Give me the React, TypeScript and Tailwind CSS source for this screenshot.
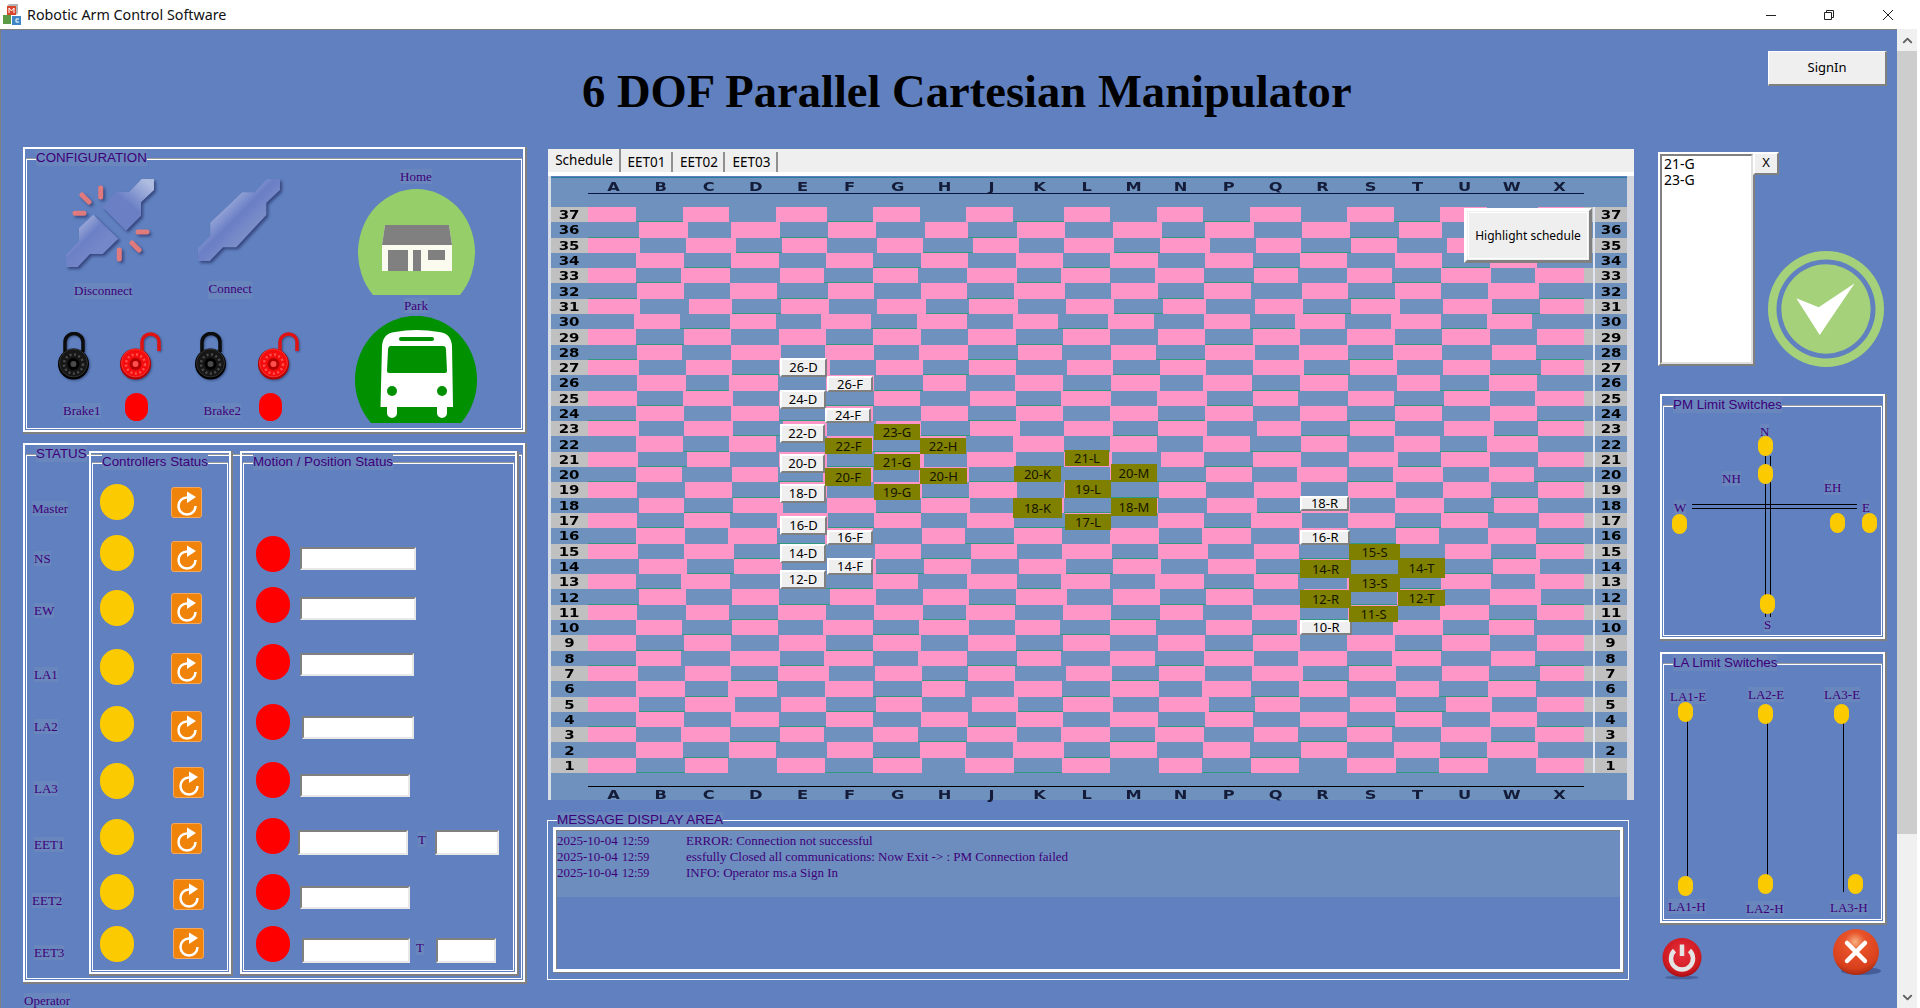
import React from 'react';
import clsx from 'clsx';
import { ChevronDown, ChevronUp } from 'lucide-react';

const serif = "font-['Liberation_Serif',serif]";
const arial = "font-['Liberation_Sans',sans-serif]";
const ui = "font-['Noto_Sans',sans-serif]";
const ink = 'text-[#3d0078]';
const raised = 'border-2 border-t-white border-l-white border-r-[#808080] border-b-[#808080]';
const sunken = 'border-2 border-t-[#808080] border-l-[#808080] border-r-[#e8e8e8] border-b-[#e8e8e8]';

const columns = ['A', 'B', 'C', 'D', 'E', 'F', 'G', 'H', 'J', 'K', 'L', 'M', 'N', 'P', 'Q', 'R', 'S', 'T', 'U', 'W', 'X'];

// how far each row's cells sit off the ideal column lines, row 37 first
const rowShift = [0, 3, 4, 0, 0, 1, 4, -2, 0, 1, 3, 1, 1, 0, 3, 0, 2, 0, 1, 3, 1, 0, 2, 3, 0, 3, 1, 0, 0, 0, 2, 0, 3, 0, 0, 0, 0];

const whiteSlots = [
  { t: '26-D', cls: 'left-[229px] top-[180px] w-[47px] h-[19px] border-[#707070]' },
  { t: '26-F', cls: 'left-[276px] top-[198px] w-[46px] h-[16px]' },
  { t: '24-D', cls: 'left-[229px] top-[212px] w-[46px] h-[19px]' },
  { t: '24-F', cls: 'left-[274px] top-[230px] w-[46px] h-[15px]' },
  { t: '22-D', cls: 'left-[229px] top-[246px] w-[45px] h-[19px]' },
  { t: '20-D', cls: 'left-[229px] top-[276px] w-[45px] h-[19px]' },
  { t: '18-D', cls: 'left-[229px] top-[306px] w-[46px] h-[19px]' },
  { t: '16-D', cls: 'left-[229px] top-[338px] w-[47px] h-[19px]' },
  { t: '16-F', cls: 'left-[276px] top-[352px] w-[46px] h-[15px]' },
  { t: '14-D', cls: 'left-[229px] top-[366px] w-[46px] h-[19px]' },
  { t: '14-F', cls: 'left-[276px] top-[380px] w-[46px] h-[17px]' },
  { t: '12-D', cls: 'left-[229px] top-[392px] w-[46px] h-[19px]' },
  { t: '18-R', cls: 'left-[749px] top-[318px] w-[49px] h-[15px]' },
  { t: '16-R', cls: 'left-[749px] top-[352px] w-[50px] h-[15px]' },
  { t: '10-R', cls: 'left-[749px] top-[442px] w-[52px] h-[15px]' },
];

const oliveSlots = [
  { t: '23-G', cls: 'left-[323px] top-[246px] w-[46px] h-[16px]' },
  { t: '22-F', cls: 'left-[274px] top-[260px] w-[47px] h-[16px]' },
  { t: '22-H', cls: 'left-[369px] top-[260px] w-[46px] h-[16px]' },
  { t: '21-G', cls: 'left-[323px] top-[276px] w-[46px] h-[16px]' },
  { t: '20-F', cls: 'left-[274px] top-[290px] w-[46px] h-[18px]' },
  { t: '20-H', cls: 'left-[369px] top-[290px] w-[47px] h-[16px]' },
  { t: '19-G', cls: 'left-[323px] top-[306px] w-[46px] h-[16px]' },
  { t: '20-K', cls: 'left-[463px] top-[288px] w-[47px] h-[16px]' },
  { t: '18-K', cls: 'left-[462px] top-[320px] w-[49px] h-[20px]' },
  { t: '21-L', cls: 'left-[514px] top-[272px] w-[44px] h-[16px]' },
  { t: '19-L', cls: 'left-[514px] top-[302px] w-[46px] h-[18px]' },
  { t: '17-L', cls: 'left-[514px] top-[336px] w-[46px] h-[16px]' },
  { t: '20-M', cls: 'left-[560px] top-[286px] w-[46px] h-[18px]' },
  { t: '18-M', cls: 'left-[560px] top-[320px] w-[46px] h-[18px]' },
  { t: '15-S', cls: 'left-[798px] top-[366px] w-[51px] h-[16px]' },
  { t: '14-R', cls: 'left-[749px] top-[382px] w-[51px] h-[18px]' },
  { t: '14-T', cls: 'left-[847px] top-[380px] w-[47px] h-[20px]' },
  { t: '13-S', cls: 'left-[798px] top-[396px] w-[51px] h-[18px]' },
  { t: '12-R', cls: 'left-[749px] top-[412px] w-[51px] h-[18px]' },
  { t: '12-T', cls: 'left-[847px] top-[412px] w-[47px] h-[16px]' },
  { t: '11-S', cls: 'left-[798px] top-[428px] w-[49px] h-[16px]' },
];

const statusLabels = [
  { t: 'Master', cls: 'mt-[56px] ml-[7px]' },
  { t: 'NS', cls: 'mt-[35px] ml-[9px]' },
  { t: 'EW', cls: 'mt-[37px] ml-[9px]' },
  { t: 'LA1', cls: 'mt-[49px] ml-[9px]' },
  { t: 'LA2', cls: 'mt-[37px] ml-[9px]' },
  { t: 'LA3', cls: 'mt-[47px] ml-[9px]' },
  { t: 'EET1', cls: 'mt-[41px] ml-[9px]' },
  { t: 'EET2', cls: 'mt-[41px] ml-[7px]' },
  { t: 'EET3', cls: 'mt-[37px] ml-[9px]' },
];

const yellowGaps = ['mt-[31px]', 'mt-[15px]', 'mt-[19px]', 'mt-[23px]', 'mt-[21px]', 'mt-[21px]', 'mt-[20px]', 'mt-[19px]', 'mt-[16px]'];
const resetGaps = ['mt-[34px]', 'mt-[23px]', 'mt-[21px]', 'mt-[29px]', 'mt-[27px]', 'mt-[25px] ml-[2px]', 'mt-[25px]', 'mt-[25px] ml-[2px]', 'mt-[18px] ml-[2px]'];
const redGaps = ['mt-[83px]', 'mt-[15px]', 'mt-[21px]', 'mt-[24px]', 'mt-[22px]', 'mt-[20px]', 'mt-[20px]', 'mt-[16px]'];

function Lbl({ children, className }: { children: React.ReactNode; className?: string }) {
  return (
    <span className={clsx(serif, ink, 'block w-fit text-[13px] leading-[15px] bg-[#6a87bd] whitespace-nowrap', className)}>
      {children}
    </span>
  );
}

function Frame({ label, className, children }: { label: string; className?: string; children?: React.ReactNode }) {
  return (
    <div className={clsx('relative border-2 border-white shadow-[1px_1px_0_1px_#808080]', className)}>
      <div className="absolute left-[1px] right-[1px] top-[10px] bottom-[1px] border border-white shadow-[0_-1px_0_#9a9a9a]" />
      <span className={clsx(arial, ink, 'absolute left-[11px] top-[1px] text-[13.33px] leading-[16px] bg-[#6a87bd] whitespace-nowrap')}>
        {label}
      </span>
      {children}
    </div>
  );
}

function AppIcon() {
  return (
    <svg width="20" height="22" viewBox="0 0 20 22" className="ml-[2px]">
      <rect x="1" y="11" width="8" height="9" fill="#5d9a45" />
      <rect x="5" y="2" width="9" height="9" fill="#d8452c" />
      <rect x="10" y="12" width="9" height="9" fill="#3f86c6" />
      <path d="M5 2l2-2h9l-2 2zM14 2l2-2v9l-2 2z" fill="#b5b5b5" />
      <path d="M7 9V4l2.5 3L12 4v5" stroke="#fff" strokeWidth="1" fill="none" />
      <path d="M17 15h-3v3h3" stroke="#fff" strokeWidth="1" fill="none" />
    </svg>
  );
}

function WindowButtons() {
  return (
    <div className="ml-auto flex items-center">
      <svg width="58" height="12" viewBox="0 0 58 12" className="mr-[1px]">
        <path d="M24 6.5h10" stroke="#222" />
      </svg>
      <svg width="58" height="12" viewBox="0 0 58 12" className="-ml-[1px] mr-[1px]">
        <path d="M24.5 3.5h7v7h-7zM26.5 3.5v-2h7v7h-2" stroke="#222" fill="none" />
      </svg>
      <svg width="58" height="12" viewBox="0 0 58 12" className="mr-[3px]">
        <path d="M24 1l10 10M34 1L24 11" stroke="#222" />
      </svg>
    </div>
  );
}

function DisconnectIcon() {
  return (
    <svg width="88" height="90" viewBox="0 0 88 90" className="drop-shadow-[2px_2px_1.5px_rgba(35,45,100,0.7)]">
      <defs>
        <linearGradient id="plugA" x1="0.15" y1="0.1" x2="0.65" y2="0.6">
          <stop offset="0" stopColor="#b4c0e2" />
          <stop offset="0.6" stopColor="#6c80c6" />
          <stop offset="1" stopColor="#7487c8" />
        </linearGradient>
        <linearGradient id="plugB" x1="0.85" y1="0.05" x2="0.35" y2="0.65">
          <stop offset="0" stopColor="#aebce0" />
          <stop offset="0.7" stopColor="#6b7fc5" />
        </linearGradient>
      </defs>
      <path d="M88 1V12L75 24.300V37.700L60 52.700 36.700 29.300 50 14H63.300L75.700 1Z" fill="url(#plugB)" />
      <path d="M27.300 36.700L52.300 60.700 36.700 76H24L11.700 89H0V76.700L13 63.300V50Z" fill="url(#plugA)" />
      <g stroke="#e87c7c" strokeWidth="5" strokeLinecap="round" opacity="0.95">
        <path d="M34.700 10v9M16 17l7 7M9 35.300h9M72 54h9M66 65l7 7M53.300 72v9" />
      </g>
    </svg>
  );
}

function ConnectIcon() {
  return (
    <svg width="82" height="82" viewBox="0 0 82 82" className="mt-[1px] drop-shadow-[2px_2px_1.5px_rgba(35,45,100,0.7)]">
      <defs>
        <linearGradient id="plugC" x1="0.2" y1="0.2" x2="0.62" y2="0.62">
          <stop offset="0" stopColor="#bcc8e6" />
          <stop offset="0.65" stopColor="#6a7ec5" />
          <stop offset="1" stopColor="#7a8dc9" />
        </linearGradient>
      </defs>
      <path d="M82 0V11L68.300 23.700V36L38.300 68.300H25L11.700 82H0V69.300L12.300 57V43.700L44.300 13.300H56.700L69 0Z" fill="url(#plugC)" />
    </svg>
  );
}

function Lock({ color, open }: { color: 'black' | 'red'; open?: boolean }) {
  const dark = color === 'red' ? '#b30000' : '#000';
  const main = color === 'red' ? '#f50d0d' : '#161616';
  const edge = color === 'red' ? '#ff5050' : '#4a4a4a';
  return (
    <svg width={open ? 41 : 32} height="48" viewBox={open ? '0 0 41 48' : '0 0 32 48'} className="drop-shadow-[1px_1px_1px_rgba(20,30,70,0.5)]">
      {open ? (
        <path d="M22 19V10a8.500 8 0 0 1 17 0v9" stroke={color === 'red' ? '#e01212' : '#111'} strokeWidth="3.500" fill="none" />
      ) : (
        <path d="M7 20V10a9 8.500 0 0 1 18 0v10" stroke="#0c0c0c" strokeWidth="3.500" fill="none" />
      )}
      <circle cx="15.500" cy="32" r="15.500" fill={dark} />
      <circle cx="15.500" cy="31" r="14" fill={main} stroke={edge} strokeWidth="0.600" />
      <circle cx="15.500" cy="32" r="9.500" fill="none" stroke={edge} strokeWidth="2.500" strokeDasharray="2 2.500" />
      <circle cx="15.500" cy="32" r="6" fill={dark} />
      <circle cx="15.500" cy="32" r="3" fill={edge} />
    </svg>
  );
}

function HomeBadge() {
  return (
    <svg width="117" height="106" viewBox="0 0 117 106">
      <path d="M15 106A58.500 63.500 0 1 1 102 106Z" fill="#96cf6a" />
      <path d="M27 36H91L94 56V82H24V56Z" fill="#fafaee" />
      <path d="M27 36H91L94 56H24Z" fill="#808080" />
      <path d="M30 61H50V82H30ZM55 61H63V82H55ZM70 61H87V71H70Z" fill="#808080" />
    </svg>
  );
}

function ParkBadge() {
  return (
    <svg width="122" height="107" viewBox="0 0 122 107">
      <path d="M16 107A61 64 0 1 1 106 107Z" fill="#009000" />
      <path d="M25.500 91L27 30Q28 17 40 16Q61 12 84 16Q96 17 97 30L98 91H92V97a5 5 0 0 1-10 0V91H42V97a5 5 0 0 1-10 0V91Z" fill="#fff" />
      <path d="M36 30H88Q91 30 91 34L92 55Q92 57 90 57H34Q32 57 32 55L33 34Q33 30 36 30Z" fill="#009000" />
      <rect x="44" y="21" width="35" height="4" rx="2" fill="#009000" />
      <circle cx="37" cy="75" r="5" fill="#009000" />
      <circle cx="87" cy="75" r="5" fill="#009000" />
    </svg>
  );
}

function ResetIcon() {
  return (
    <svg width="24" height="26" viewBox="0 0 24 26">
      <path d="M12 7.500A8.500 8.500 0 1 0 20.500 16" stroke="#fff" strokeWidth="2.500" fill="none" />
      <path d="M12 1.500L21 7L12 13Z" fill="#fff" />
    </svg>
  );
}

function Dot({ className }: { className?: string }) {
  return <div className={clsx('rounded-full', className)} />;
}

function Config() {
  return (
    <Frame label="CONFIGURATION" className="h-[285px] flex">
      <div className="w-[330px] relative">
        <div className="flex pt-[29px] pl-[41px]">
          <DisconnectIcon />
          <div className="ml-[44px]">
            <ConnectIcon />
          </div>
        </div>
        <div className="flex mt-[13px] h-[18px]">
          <Lbl className="ml-[49px] mt-[2px]">Disconnect</Lbl>
          <Lbl className="ml-[76px]">Connect</Lbl>
        </div>
        <div className="flex mt-[33px] pl-[33px]">
          <Lock color="black" />
          <div className="ml-[30px]"><Lock color="red" open /></div>
          <div className="ml-[34px]"><Lock color="black" /></div>
          <div className="ml-[31px]"><Lock color="red" open /></div>
        </div>
        <div className="flex items-center mt-[13px] h-[28px]">
          <Lbl className="ml-[38px] w-[36px] mt-[7px]">Brake1</Lbl>
          <Dot className="ml-[24px] w-[23px] h-[28px] bg-[#ff0000]" />
          <Lbl className="ml-[56px] w-[36px] mt-[7px]">Brake2</Lbl>
          <Dot className="ml-[18px] w-[23px] h-[28px] bg-[#ff0000]" />
        </div>
      </div>
      <div className="w-[122px] flex flex-col items-center pt-[20px]">
        <Lbl>Home</Lbl>
        <div className="mt-[5px]"><HomeBadge /></div>
        <Lbl className="mt-[3px]">Park</Lbl>
        <div className="mt-[3px]"><ParkBadge /></div>
      </div>
    </Frame>
  );
}

function Status() {
  return (
    <Frame label="STATUS" className="h-[539px] flex">
      <div className="w-[64px] shrink-0">
        {statusLabels.map((l) => (
          <Lbl key={l.t} className={l.cls}>{l.t}</Lbl>
        ))}
      </div>
      <Frame label="Controllers Status" className="w-[142px] h-[523px] mt-[6px] flex pl-[9px]">
        <div className="relative flex flex-col">
          {yellowGaps.map((g, i) => (
            <Dot key={i} className={clsx('w-[34px] h-[36px] bg-[#fbca00]', g)} />
          ))}
        </div>
        <div className="relative flex flex-col ml-[37px]">
          {resetGaps.map((g, i) => (
            <div key={i} className={clsx('w-[31px] h-[31px] rounded-[3px] bg-[#f0830a] border border-[#f5a85a] flex items-center justify-center', g)}>
              <ResetIcon />
            </div>
          ))}
        </div>
      </Frame>
      <Frame label="Motion / Position Status" className="w-[277px] h-[523px] mt-[6px] ml-[9px] flex pl-[14px]">
        <div className="relative flex flex-col">
          {redGaps.map((g, i) => (
            <Dot key={i} className={clsx('w-[34px] h-[36px] bg-[#ff0000]', g)} />
          ))}
        </div>
        <div className="relative flex flex-col ml-[10px]">
          <div className={clsx(sunken, 'mt-[94px] w-[116px] h-[23px] bg-white')} />
          <div className={clsx(sunken, 'mt-[27px] w-[116px] h-[23px] bg-white')} />
          <div className={clsx(sunken, 'mt-[33px] w-[114px] h-[23px] bg-white')} />
          <div className={clsx(sunken, 'mt-[40px] ml-[2px] w-[112px] h-[23px] bg-white')} />
          <div className={clsx(sunken, 'mt-[35px] w-[110px] h-[23px] bg-white')} />
          <div className="flex mt-[33px] -ml-[2px]">
            <div className={clsx(sunken, 'w-[110px] h-[25px] bg-white')} />
            <Lbl className="ml-[10px] h-[15px] mt-[2px]">T</Lbl>
            <div className={clsx(sunken, 'ml-[9px] w-[64px] h-[25px] bg-white')} />
          </div>
          <div className={clsx(sunken, 'mt-[31px] w-[110px] h-[23px] bg-white')} />
          <div className="flex mt-[29px] ml-[2px]">
            <div className={clsx(sunken, 'w-[108px] h-[25px] bg-white')} />
            <Lbl className="ml-[6px] h-[15px] mt-[2px]">T</Lbl>
            <div className={clsx(sunken, 'ml-[12px] w-[60px] h-[25px] bg-white')} />
          </div>
        </div>
      </Frame>
    </Frame>
  );
}

function LetterRow({ className }: { className?: string }) {
  return (
    <div className={clsx('grid grid-cols-21 w-[993px] ml-[39px] h-[14px]', className)}>
      {columns.map((c) => (
        <span key={c} className="flex items-center justify-center font-['DejaVu_Sans',sans-serif] font-bold text-[13px] leading-none text-[#141c3a] scale-x-125">
          {c}
        </span>
      ))}
    </div>
  );
}

function RowNumber({ n, odd }: { n: number; odd: boolean }) {
  return (
    <div className={clsx("flex items-center justify-center h-full font-['DejaVu_Sans',sans-serif] font-bold text-[13px] leading-none text-black", odd && 'bg-[#c0c0c0]')}>
      <span className="scale-x-115">{n}</span>
    </div>
  );
}

function ScheduleRow({ n, index }: { n: number; index: number }) {
  const odd = n % 2 === 1;
  const edges: number[] = [0];
  for (let c = 1; c < 21; c++) {
    const wobble = ((n * 7 + c * 13 + n * c * 3) % 5) - 2;
    edges.push(Math.round(47.4 * c) + rowShift[index] + wobble);
  }
  edges.push(996);
  return (
    <div className="flex min-h-0">
      <div className="w-[37px]"><RowNumber n={n} odd={odd} /></div>
      {columns.map((c, i) => {
        const pink = odd ? i % 2 === 0 : i % 2 === 1;
        const line = !pink && (n * 5 + i * 3) % 4 === 0;
        return (
          <div
            key={c}
            className={clsx(pink ? 'bg-[#ff96c8]' : 'bg-[#6e92bd]', line && 'border-b border-[#2f9a80]')}
            style={{ width: edges[i + 1] - edges[i] }}
          />
        );
      })}
      <div className={clsx('w-[9px]', odd && 'bg-[#c0c0c0]')} />
      <div className="w-[2px] bg-[#dfe6f0]" />
      <div className="w-[32px]"><RowNumber n={n} odd={odd} /></div>
    </div>
  );
}

function Schedule() {
  const rows = Array.from({ length: 37 }, (_, i) => 37 - i);
  return (
    <div className="h-[624px] border-l-[3px] border-l-[#d9dde6] border-r-[7px] border-r-[#d3d6de] pt-[1px] w-[1086px]">
      <div className="relative h-[623px] w-[1076px] bg-[#6e92bd] border-t border-[#2a7a9a] border-b-0">
        <LetterRow className="mt-[1px]" />
        <div className="ml-[37px] w-[996px] h-[1px] bg-[#0c1440]" />
        <div className="mt-[13px] grid grid-rows-[repeat(37,1fr)] h-[566px]">
          {rows.map((n, i) => (
            <ScheduleRow key={n} n={n} index={i} />
          ))}
        </div>
        <div className="mt-[13px] ml-[37px] w-[996px] h-[1px] bg-black" />
        <LetterRow />
        {whiteSlots.map((s) => (
          <div key={s.t} className={clsx(ui, raised, 'absolute bg-[#efefef] text-[13px] leading-none text-black flex items-center justify-center', s.cls)}>
            {s.t}
          </div>
        ))}
        {oliveSlots.map((s) => (
          <div key={s.t} className={clsx(ui, 'absolute bg-[#808000] text-[13px] leading-none text-[#141400] flex items-center justify-center', s.cls)}>
            {s.t}
          </div>
        ))}
        <div className={clsx(ui, 'absolute left-[913px] top-[30px] w-[128px] h-[55px] bg-[#efefef] border-[3px] border-t-white border-l-white border-r-[#808080] border-b-[#808080] outline outline-1 -outline-offset-[5px] outline-white text-[12px] text-black flex items-center justify-center')}>
          Highlight schedule
        </div>
      </div>
    </div>
  );
}

function Tabs() {
  const tab = 'h-[20px] mt-[3px] mr-[2px] flex items-center justify-center border-r-2 border-[#909090] text-[13.5px] text-black';
  return (
    <div className={clsx(ui, 'h-[27px] w-[1086px] bg-[#efefef] border-b-[4px] border-b-white flex pl-[1px]')}>
      <div className="w-[72px] h-[23px] border-r-2 border-[#909090] bg-[#efefef] flex items-center justify-center text-[13.5px] text-black mr-[1px]">Schedule</div>
      <div className={clsx(tab, 'w-[51px]')}>EET01</div>
      <div className={clsx(tab, 'w-[50px]')}>EET02</div>
      <div className={clsx(tab, 'w-[51px]')}>EET03</div>
    </div>
  );
}

function Messages() {
  const rows = [
    { d: '2025-10-04', h: '12:59', m: 'ERROR: Connection not successful' },
    { d: '2025-10-04', h: '12:59', m: 'essfully Closed all communications: Now Exit -> : PM Connection failed' },
    { d: '2025-10-04', h: '12:59', m: 'INFO: Operator ms.a Sign In' },
  ];
  return (
    <div className="relative mt-[20px] -ml-[1px] w-[1082px] h-[160px] border border-white pt-[6px] px-[5px]">
      <span className={clsx(arial, ink, 'absolute -top-[9px] left-[9px] text-[13.5px] leading-[15px] bg-[#6a87bd] whitespace-nowrap')}>
        MESSAGE DISPLAY AREA
      </span>
      <div className="h-[145px] border-[3px] border-white shadow-[1px_1px_0_#808080]">
        <div className="h-[139px] border-t border-l border-[#808080]">
          <div className={clsx(serif, ink, 'h-[66px] bg-[#6e8dbf] text-[13px] pt-[2px]')}>
            {rows.map((r, i) => (
              <div key={i} className="flex h-[16px] leading-[16px] whitespace-nowrap">
                <span className="w-[65px]">{r.d}</span>
                <span className="w-[64px] text-[12px]">{r.h}</span>
                <span>{r.m}</span>
              </div>
            ))}
          </div>
        </div>
      </div>
    </div>
  );
}

function CheckBadge() {
  return (
    <svg width="116" height="116" viewBox="0 0 116 116" className="mt-[76px] ml-[15px]">
      <circle cx="58" cy="58" r="58" fill="#a5d17a" />
      <circle cx="58" cy="58" r="49.500" fill="#6080bf" />
      <circle cx="58" cy="58" r="44.700" fill="#a5d17a" />
      <path d="M28.300 47.300L50.700 56.300L86.700 32.300L51.700 84Z" fill="#fff" />
    </svg>
  );
}

function Oval({ className }: { className: string }) {
  return <div className={clsx('absolute rounded-full bg-[#fbca00] w-[15px] h-[20px]', className)} />;
}

function PmSwitches() {
  return (
    <Frame label="PM Limit Switches" className="w-[225px] h-[245px] mt-[27px] ml-[2px]">
      {/* schematic: origin is the frame's padding box at 1662,395 */}
      <div className="absolute left-[103px] top-[60px] w-[6px] h-[162px] border-x border-black" />
      <div className="absolute left-[30px] top-[108px] w-[165px] h-[5px] border-y border-black" />
      <Lbl className="absolute left-[98px] top-[28px]">N</Lbl>
      <Lbl className="absolute left-[60px] top-[75px]">NH</Lbl>
      <Lbl className="absolute left-[162px] top-[84px]">EH</Lbl>
      <Lbl className="absolute left-[12px] top-[104px]">W</Lbl>
      <Lbl className="absolute left-[200px] top-[104px]">E</Lbl>
      <Lbl className="absolute left-[102px] top-[221px]">S</Lbl>
      <Oval className="left-[96px] top-[40px]" />
      <Oval className="left-[96px] top-[68px]" />
      <Oval className="left-[10px] top-[118px]" />
      <Oval className="left-[168px] top-[117px]" />
      <Oval className="left-[200px] top-[117px]" />
      <Oval className="left-[98px] top-[198px]" />
    </Frame>
  );
}

function LaSwitches() {
  return (
    <Frame label="LA Limit Switches" className="w-[225px] h-[271px] mt-[13px] ml-[2px]">
      {/* schematic: origin is the frame's padding box at 1662,653 */}
      <div className="absolute left-[25px] top-[67px] w-[1px] h-[155px] bg-black" />
      <div className="absolute left-[105px] top-[69px] w-[1px] h-[153px] bg-black" />
      <div className="absolute left-[181px] top-[69px] w-[1px] h-[169px] bg-black" />
      <Lbl className="absolute left-[8px] top-[35px]">LA1-E</Lbl>
      <Lbl className="absolute left-[86px] top-[33px]">LA2-E</Lbl>
      <Lbl className="absolute left-[162px] top-[33px]">LA3-E</Lbl>
      <Oval className="left-[16px] top-[48px]" />
      <Oval className="left-[96px] top-[50px]" />
      <Oval className="left-[172px] top-[50px]" />
      <Oval className="left-[16px] top-[222px]" />
      <Oval className="left-[96px] top-[220px]" />
      <Oval className="left-[186px] top-[220px]" />
      <Lbl className="absolute left-[6px] top-[245px]">LA1-H</Lbl>
      <Lbl className="absolute left-[84px] top-[247px]">LA2-H</Lbl>
      <Lbl className="absolute left-[168px] top-[246px]">LA3-H</Lbl>
    </Frame>
  );
}

function PowerIcon() {
  return (
    <svg width="40" height="42" viewBox="0 0 40 42" className="mt-[8px] ml-[4px]">
      <defs>
        <radialGradient id="powerBall" cx="0.5" cy="0.4" r="0.6">
          <stop offset="0" stopColor="#e8303a" />
          <stop offset="0.8" stopColor="#cf1a22" />
          <stop offset="1" stopColor="#a50c12" />
        </radialGradient>
      </defs>
      <ellipse cx="20" cy="39.500" rx="17" ry="1.800" fill="#3c4f86" opacity="0.6" />
      <circle cx="20" cy="19.500" r="19.500" fill="url(#powerBall)" />
      <path d="M12.500 12.500A11 11 0 1 0 27.500 12.500" stroke="#e4e4e4" strokeWidth="4.500" fill="none" />
      <path d="M20 6.500V18" stroke="#e4e4e4" strokeWidth="4.500" />
    </svg>
  );
}

function CloseIcon() {
  return (
    <svg width="50" height="48" viewBox="0 0 50 48" className="ml-auto -mr-[2px] -mt-[1px]">
      <defs>
        <radialGradient id="closeBall" cx="0.48" cy="0.28" r="0.72">
          <stop offset="0" stopColor="#f6b080" />
          <stop offset="0.3" stopColor="#e8532a" />
          <stop offset="0.8" stopColor="#d8401c" />
          <stop offset="1" stopColor="#a82a10" />
        </radialGradient>
      </defs>
      <ellipse cx="28" cy="42" rx="20" ry="4" fill="#2e3f78" opacity="0.55" />
      <circle cx="23" cy="23" r="23" fill="url(#closeBall)" />
      <path d="M14 14L32 32M32 14L14 32" stroke="#fff" strokeWidth="4.500" strokeLinecap="round" />
    </svg>
  );
}

function RightColumn() {
  return (
    <div className="ml-[24px] w-[232px] pt-[5px]">
      <div className="flex">
        <div className={clsx(raised, 'w-[97px] h-[214px]')}>
          <div className={clsx(ui, 'h-full bg-white border-2 border-t-[#808080] border-l-[#808080] border-r-[#e0e0e0] border-b-[#e0e0e0] text-[14px] leading-[16px] text-black pl-[2px]')}>
            <div>21-G</div>
            <div>23-G</div>
          </div>
        </div>
        <div className="-ml-[2px] relative">
          <div className={clsx(ui, raised, 'w-[26px] h-[23px] bg-[#efefef] text-[13px] text-black flex items-center justify-center pb-[2px]')}>X</div>
          <CheckBadge />
        </div>
      </div>
      <PmSwitches />
      <LaSwitches />
      <div className="flex items-start mt-[7px] w-[223px]">
        <PowerIcon />
        <CloseIcon />
      </div>
    </div>
  );
}

function Scrollbar() {
  return (
    <div className="w-[20px] shrink-0 bg-[#f0f0f0] flex flex-col items-center">
      <div className="h-[22px] flex items-center justify-center">
        <ChevronUp size={15} strokeWidth={3} color="#606060" />
      </div>
      <div className="h-[783px] w-full bg-[#cdcdcd]" />
      <div className="flex-1 flex items-end pb-[3px]">
        <ChevronDown size={15} strokeWidth={3} color="#606060" />
      </div>
    </div>
  );
}

export default function App() {
  return (
    <div className="w-[1920px] h-[1008px] overflow-hidden flex flex-col bg-white">
      <div className={clsx(ui, 'h-[29px] shrink-0 flex items-center text-[14.3px] text-[#111]')}>
        <AppIcon />
        <span className="ml-[5px]">Robotic Arm Control Software</span>
        <WindowButtons />
      </div>
      <div className="flex-1 min-h-0 flex pr-[3px]">
        <main className="flex-1 min-w-0 bg-[#6080bf] border-t border-l border-[#808080] overflow-hidden">
          <div className="h-[117px] flex items-start">
            <h1 className={clsx(serif, 'ml-[581px] mt-[38px] text-[46.6px] leading-[46px] font-bold text-black whitespace-nowrap')}>
              6 DOF Parallel Cartesian Manipulator
            </h1>
            <button className={clsx(ui, 'ml-auto mr-[10px] mt-[21px] w-[119px] h-[35px] bg-[#efefef] border-t border-l border-white border-r-2 border-b-2 border-r-[#808080] border-b-[#808080] text-[13px] text-black')}>
              SignIn
            </button>
          </div>
          <div className="flex items-start">
            <div className="ml-[22px] w-[502px] shrink-0">
              <Config />
              <div className="mt-[11px]"><Status /></div>
              <Lbl className="mt-[11px] ml-[1px]">Operator</Lbl>
            </div>
            <div className="ml-[23px] w-[1086px] shrink-0 pt-[2px]">
              <Tabs />
              <Schedule />
              <Messages />
            </div>
            <RightColumn />
          </div>
        </main>
        <Scrollbar />
      </div>
    </div>
  );
}
